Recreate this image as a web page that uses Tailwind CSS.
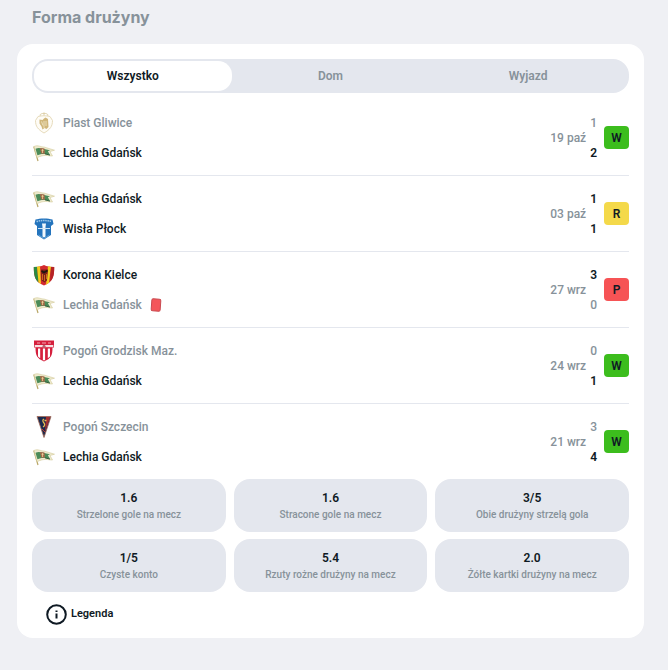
<!DOCTYPE html>
<html lang="pl">
<head>
  <meta charset="UTF-8">
  <meta name="viewport" content="width=device-width, initial-scale=1">
  <title>Forma drużyny</title>
  <script src="https://cdn.jsdelivr.net/npm/@tailwindcss/browser@4"></script>
</head>
<body class="min-h-screen bg-[#eff0f4] pl-[17px] pr-6 pb-8 font-['Roboto','Liberation_Sans',sans-serif] text-xs font-medium text-[#0f1a24]">

  <!-- club crests -->
  <svg class="hidden">
    <symbol id="lechia" viewBox="0 0 22 22">
      <path d="M.8 4.500 5 19" stroke="#b9a767" stroke-width="1.200" fill="none"/>
      <path d="M1 4.500c4-2 7 .8 10 .5l10.500 3.200-4.500 1.300 2.500 4.500c-5 0-8-2-15.500 1.700z" fill="#eeebcf" stroke="#d3ca98" stroke-width=".6"/>
      <path d="M2.500 6.700c4-1.700 7 .2 14.500 1.500l-2.100 1.100 2 3.500c-5-.6-7-1.800-12.500.4z" fill="#4b8b58"/>
      <path d="M7 6l4.500.4.300 5.400-3.600-.2z" fill="#a8694a"/>
      <path d="M9.500 7v4M8.500 8.300h2.200" stroke="#f0dfa0" stroke-width=".7"/>
      <path d="M12 11.800l5 1.300" stroke="#2f5c3a" stroke-width="1"/>
    </symbol>
    <symbol id="piast" viewBox="0 0 22 22">
      <path d="M7.500 4c-2.500-3.500 9.500-3.500 7 0M11 .5v3" stroke="#ddcfa6" fill="none"/>
      <path d="M5 4.500c4-1 8-1 12 0l2.500 4c0 6-2.500 9-8.500 12.500-6-3.500-8.500-6.500-8.500-12.500z" fill="#fefcf6" stroke="#e3d7b4" stroke-width=".9"/>
      <path d="M6.500 7.500l3 .5 1.500-1.500 1.500-1 2.500 1.500.5 8-2 2-2-1-2 1.500-1-3-2-3z" fill="#d0b67a"/>
      <path d="M8.500 9.500l1.500 4M13 9v5M11 9v7" stroke="#f3e8c9" stroke-width=".8"/>
    </symbol>
    <symbol id="wisla" viewBox="0 0 22 22">
      <path d="M2.500 1.500c4-1.500 13-1.500 17 0l1 4.500-2.500 2v9L11 21.500 4 17V8L1.500 6z" fill="#2474bd"/>
      <path d="M3.500 3.500c5-1.300 10-1.300 15 0" stroke="#9cc7e8" stroke-width="1.500" stroke-dasharray="1.500 .7" fill="none"/>
      <path d="M9 5.500h4l-.5 3.500v9.500L11 19.500l-1.500-1V9z" fill="#f2f8fc"/>
      <path d="M5 10.500h12" stroke="#cfe3f3" stroke-width="1"/>
      <path d="M5.500 17l5.500 3.500 5.500-3.500" stroke="#70abd9" stroke-width=".8" fill="none"/>
    </symbol>
    <symbol id="korona" viewBox="0 0 22 22">
      <path d="M.8 3c4 0 7-.5 10.200-2 3 1.500 6 2 10.200 2 0 9.500-1.200 15-10.200 18.500C2 18 .8 12.500.8 3z" fill="#d32a2e"/>
      <path d="M.8 3l3.200-.2 1.500 15.700C1.800 15 .8 11 .8 3z" fill="#2b8a42"/>
      <path d="M4 2.800l3-.6 1 17.800-2.500-1.700zM15 2.200l3 .6-2 16-3 2z" fill="#f2cf1d"/>
      <path d="M18 2.800l3.200.2c0 7-.7 11-4 14.500z" fill="#b52426"/>
      <path d="M8 5.500h7l-1 11-2.500 2-3-2z" fill="#7a2018"/>
      <path d="M9.500 10v6M11.500 11v6M13.500 10v5" stroke="#e27b22" stroke-width=".8"/>
      <path d="M8.500 7l2.500 1.500 3.500-2" stroke="#1c1610" stroke-width="1.600" fill="none"/>
    </symbol>
    <symbol id="grodzisk" viewBox="0 0 22 22">
      <path d="M1 .5h20v7h-1.500c0 8-1.500 11-8.500 14-7-3-8.500-6-8.500-14H1z" fill="#d5203d"/>
      <path d="M1.700 5h18.600v2.200H1.700z" fill="#f6dfe2"/>
      <path d="M5 8.500h2.200v9.700L5 16.500zM9.900 8.500h2.200v11.700H9.900zM14.800 8.500H17v8l-2.200 1.700z" fill="#fff"/>
      <path d="M4 3h3M9 3h4M15 3h3" stroke="#f3a7b2" stroke-width="1.200"/>
      <circle cx="11" cy="6.200" r="1.500" fill="#b8606d"/>
    </symbol>
    <symbol id="szczecin" viewBox="0 0 22 22">
      <path d="M4 .5h14L11 21.500z" fill="#1b2a4d" stroke="#a36a58" stroke-width=".8"/>
      <path d="M13 1h4.200L12 16z" fill="#a12c2f"/>
      <path d="M11 3c-2 1-1 3 0 4s1 3-1 4M11.500 4.500h2" stroke="#e9bd52" stroke-width="1.300" fill="none"/>
      <path d="M9 13l3 3" stroke="#c0392b" stroke-width="1"/>
    </symbol>
  </svg>

  <h2 class="pl-[15px] pt-[5px] pb-[15px] font-['Inter','Liberation_Sans',sans-serif] text-base leading-6 font-bold text-[#87929a]">Forma drużyny</h2>

  <main class="rounded-2xl bg-white px-[15px] pt-[15px] pb-3">

    <div class="grid grid-cols-3 rounded-2xl bg-[#e4e7ee] p-[2px] font-semibold text-[#87929a]">
      <button class="h-[30px] rounded-[14px] bg-white text-[#0f1a24]">Wszystko</button>
      <button class="h-[30px] rounded-[14px]">Dom</button>
      <button class="h-[30px] rounded-[14px]">Wyjazd</button>
    </div>

    <ul class="mt-[7px]">
      <li class="flex items-center border-b border-[#e4e7ee] pt-2 pb-[7px]">
        <div class="flex-1 pl-px">
          <div class="flex h-[30px] items-center gap-2 text-[#87929a]"><svg class="size-[22px]"><use href="#piast"/></svg>Piast Gliwice</div>
          <div class="flex h-[30px] items-center gap-2"><svg class="size-[22px]"><use href="#lechia"/></svg>Lechia Gdańsk</div>
        </div>
        <time class="mr-1 text-[#87929a]">19 paź</time>
        <div class="text-center leading-[30px] font-semibold">
          <div class="font-medium text-[#87929a]">1</div>
          <div>2</div>
        </div>
        <span class="mb-px ml-[7px] w-[25px] rounded bg-[#3cbd1d] pt-px text-center leading-[22px] font-semibold">W</span>
      </li>
      <li class="flex items-center border-b border-[#e4e7ee] pt-2 pb-[7px]">
        <div class="flex-1 pl-px">
          <div class="flex h-[30px] items-center gap-2"><svg class="size-[22px]"><use href="#lechia"/></svg>Lechia Gdańsk</div>
          <div class="flex h-[30px] items-center gap-2"><svg class="size-[22px]"><use href="#wisla"/></svg>Wisła Płock</div>
        </div>
        <time class="mr-1 text-[#87929a]">03 paź</time>
        <div class="text-center leading-[30px] font-semibold">
          <div>1</div>
          <div>1</div>
        </div>
        <span class="mb-px ml-[7px] w-[25px] rounded bg-[#f4d94a] pt-px text-center leading-[22px] font-semibold">R</span>
      </li>
      <li class="flex items-center border-b border-[#e4e7ee] pt-2 pb-[7px]">
        <div class="flex-1 pl-px">
          <div class="flex h-[30px] items-center gap-2"><svg class="size-[22px]"><use href="#korona"/></svg>Korona Kielce</div>
          <div class="flex h-[30px] items-center gap-2 text-[#87929a]">
            <svg class="size-[22px]"><use href="#lechia"/></svg>Lechia Gdańsk
            <svg class="h-[14px] w-3" viewBox="0 0 12 14"><rect x="1.500" y="1" width="9" height="12" rx="1.500" fill="#f4565a" stroke="#c94a50" transform="rotate(4 6 7)"/></svg>
          </div>
        </div>
        <time class="mr-1 text-[#87929a]">27 wrz</time>
        <div class="text-center leading-[30px] font-semibold">
          <div>3</div>
          <div class="font-medium text-[#87929a]">0</div>
        </div>
        <span class="mb-px ml-[7px] w-[25px] rounded bg-[#f65355] pt-px text-center leading-[22px] font-semibold">P</span>
      </li>
      <li class="flex items-center border-b border-[#e4e7ee] pt-2 pb-[7px]">
        <div class="flex-1 pl-px">
          <div class="flex h-[30px] items-center gap-2 text-[#87929a]"><svg class="size-[22px]"><use href="#grodzisk"/></svg>Pogoń Grodzisk Maz.</div>
          <div class="flex h-[30px] items-center gap-2"><svg class="size-[22px]"><use href="#lechia"/></svg>Lechia Gdańsk</div>
        </div>
        <time class="mr-1 text-[#87929a]">24 wrz</time>
        <div class="text-center leading-[30px] font-semibold">
          <div class="font-medium text-[#87929a]">0</div>
          <div>1</div>
        </div>
        <span class="mb-px ml-[7px] w-[25px] rounded bg-[#3cbd1d] pt-px text-center leading-[22px] font-semibold">W</span>
      </li>
      <li class="flex items-center pt-2 pb-[7px]">
        <div class="flex-1 pl-px">
          <div class="flex h-[30px] items-center gap-2 text-[#87929a]"><svg class="size-[22px]"><use href="#szczecin"/></svg>Pogoń Szczecin</div>
          <div class="flex h-[30px] items-center gap-2"><svg class="size-[22px]"><use href="#lechia"/></svg>Lechia Gdańsk</div>
        </div>
        <time class="mr-1 text-[#87929a]">21 wrz</time>
        <div class="text-center leading-[30px] font-semibold">
          <div class="font-medium text-[#87929a]">3</div>
          <div>4</div>
        </div>
        <span class="mb-px ml-[7px] w-[25px] rounded bg-[#3cbd1d] pt-px text-center leading-[22px] font-semibold">W</span>
      </li>
    </ul>

    <dl class="grid grid-cols-3 gap-x-2 gap-y-[7px] text-center">
      <div class="flex flex-col-reverse rounded-2xl bg-[#e4e7ee] pt-[11px] pb-[9px]">
        <dt class="text-[10px] leading-[17px] text-[#87929a]">Strzelone gole na mecz</dt>
        <dd class="leading-4 font-semibold">1.6</dd>
      </div>
      <div class="flex flex-col-reverse rounded-2xl bg-[#e4e7ee] pt-[11px] pb-[9px]">
        <dt class="text-[10px] leading-[17px] text-[#87929a]">Stracone gole na mecz</dt>
        <dd class="leading-4 font-semibold">1.6</dd>
      </div>
      <div class="flex flex-col-reverse rounded-2xl bg-[#e4e7ee] pt-[11px] pb-[9px]">
        <dt class="text-[10px] leading-[17px] text-[#87929a]">Obie drużyny strzelą gola</dt>
        <dd class="leading-4 font-semibold">3/5</dd>
      </div>
      <div class="flex flex-col-reverse rounded-2xl bg-[#e4e7ee] pt-[11px] pb-[9px]">
        <dt class="text-[10px] leading-[17px] text-[#87929a]">Czyste konto</dt>
        <dd class="leading-4 font-semibold">1/5</dd>
      </div>
      <div class="flex flex-col-reverse rounded-2xl bg-[#e4e7ee] pt-[11px] pb-[9px]">
        <dt class="text-[10px] leading-[17px] text-[#87929a]">Rzuty rożne drużyny na mecz</dt>
        <dd class="leading-4 font-semibold">5.4</dd>
      </div>
      <div class="flex flex-col-reverse rounded-2xl bg-[#e4e7ee] pt-[11px] pb-[9px]">
        <dt class="text-[10px] leading-[17px] text-[#87929a]">Żółte kartki drużyny na mecz</dt>
        <dd class="leading-4 font-semibold">2.0</dd>
      </div>
    </dl>

    <button class="mt-[11px] mb-px ml-[14px] flex items-center gap-1 text-[11px] leading-[22px] font-semibold">
      <svg class="size-[21px]" viewBox="0 0 21 21" fill="none" stroke="#0f1a24" stroke-width="2">
        <circle cx="10.500" cy="10.500" r="9.300"/>
        <path d="M10.500 9.500v5M10.500 6.500v1.500"/>
      </svg>
      Legenda
    </button>
  </main>

</body>
</html>
